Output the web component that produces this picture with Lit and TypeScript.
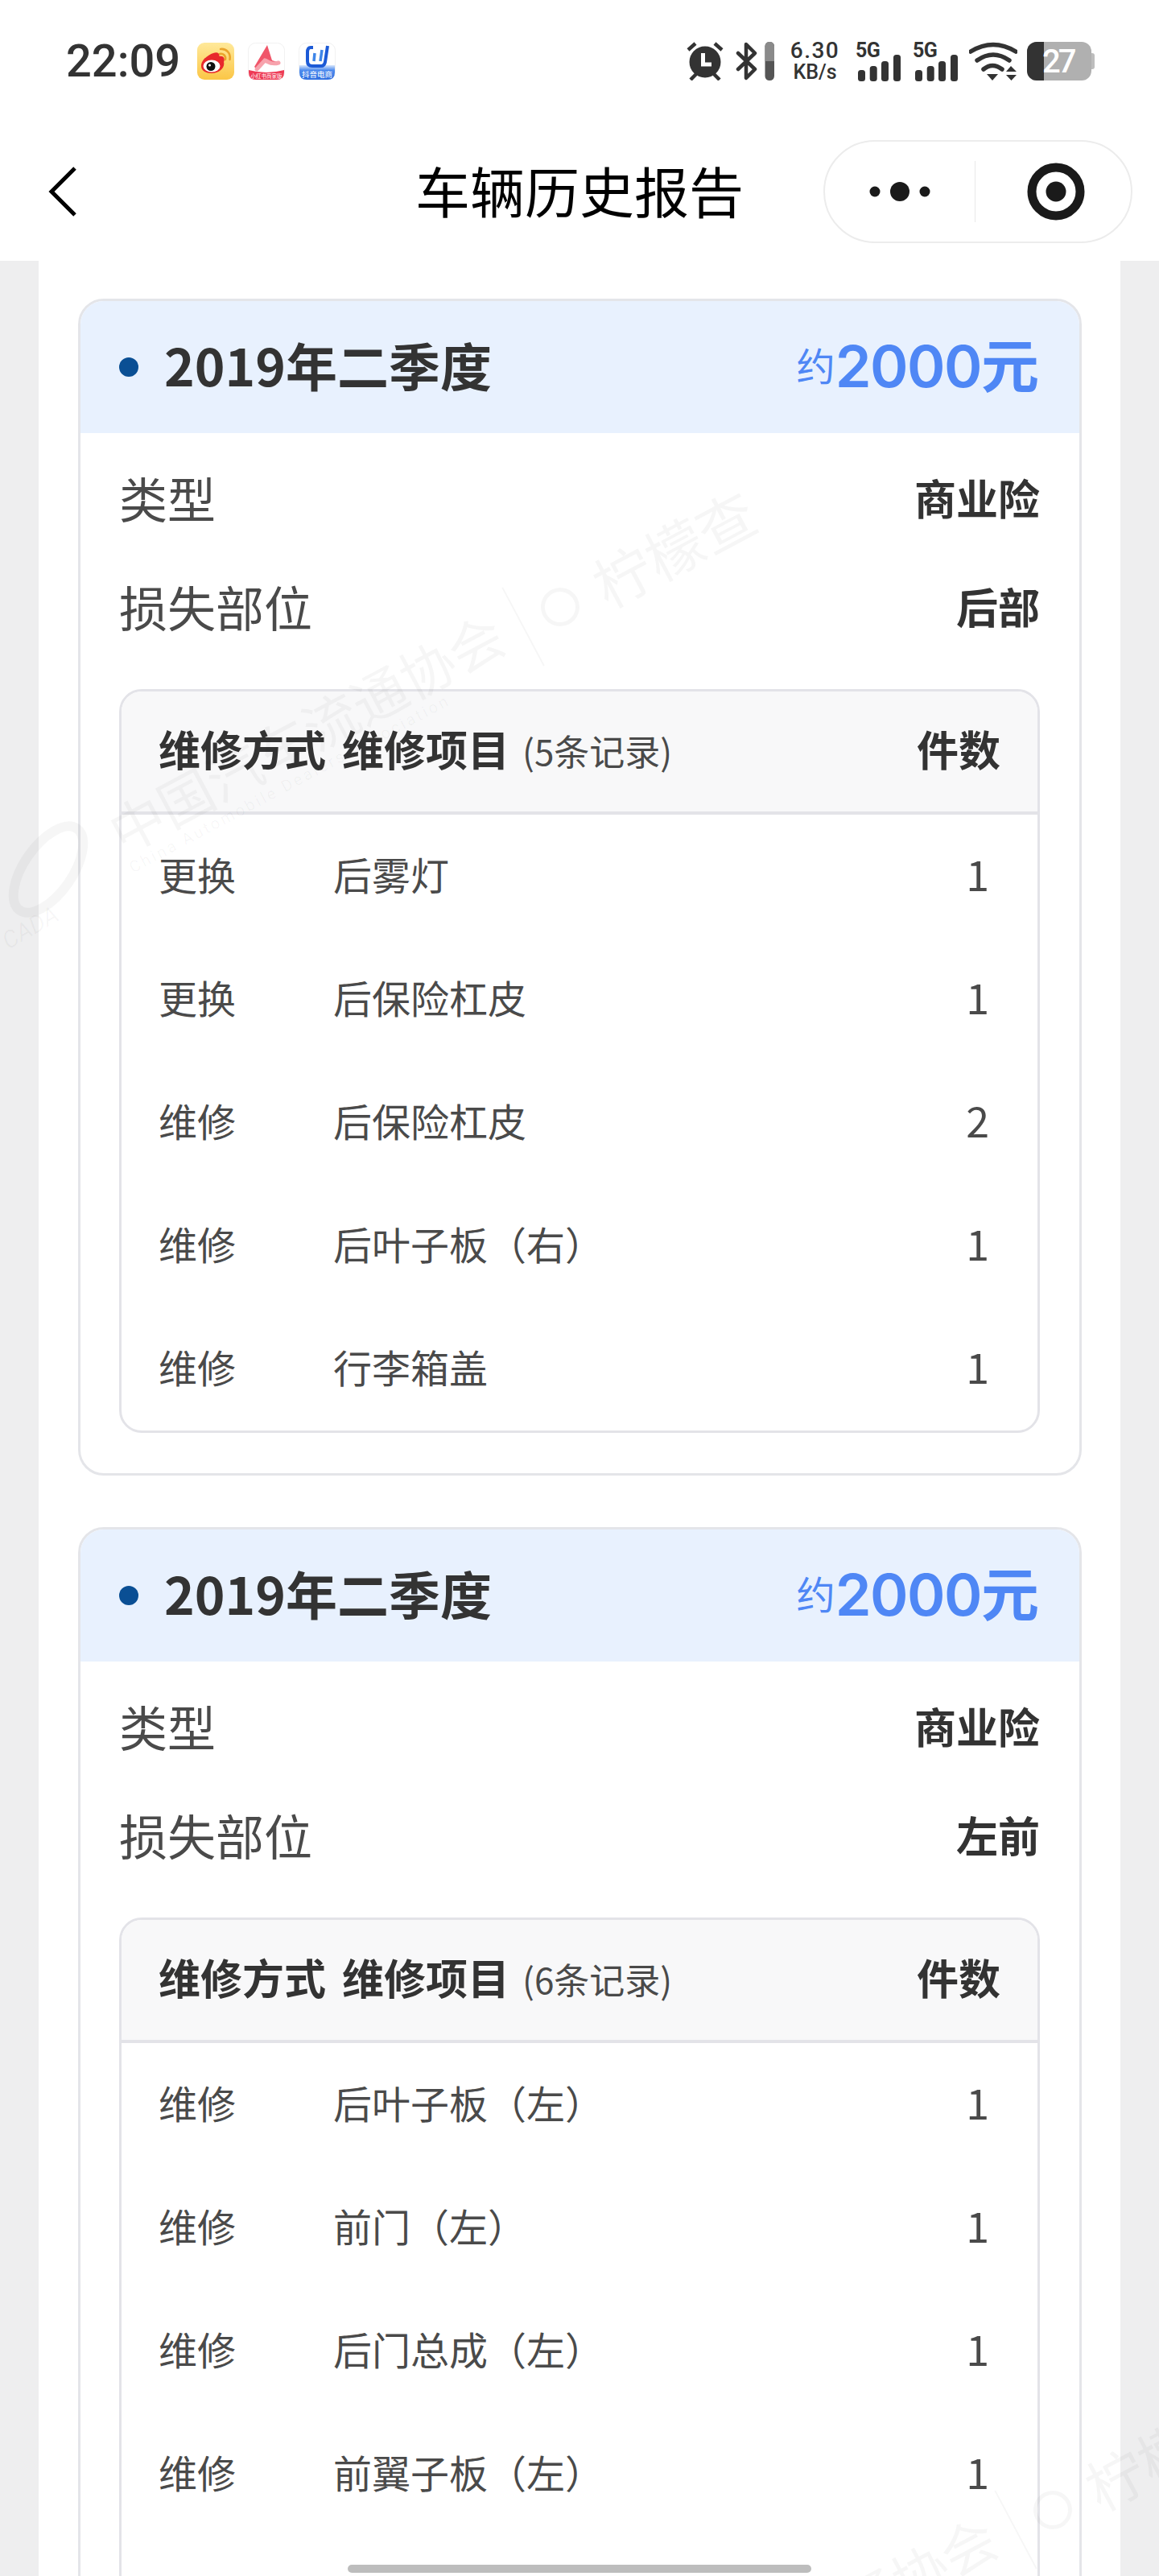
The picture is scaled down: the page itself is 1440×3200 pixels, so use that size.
import { LitElement, html, css, svg } from "lit";
import { customElement } from "lit/decorators.js";

interface Row { way: string; item: string; n: string }
interface Claim { quarter: string; type: string; part: string; records: string; rows: Row[] }

const claims: Claim[] = [
  {
    quarter: "2019年二季度", type: "商业险", part: "后部", records: "(5条记录)",
    rows: [
      { way: "更换", item: "后雾灯", n: "1" },
      { way: "更换", item: "后保险杠皮", n: "1" },
      { way: "维修", item: "后保险杠皮", n: "2" },
      { way: "维修", item: "后叶子板（右）", n: "1" },
      { way: "维修", item: "行李箱盖", n: "1" },
    ],
  },
  {
    quarter: "2019年二季度", type: "商业险", part: "左前", records: "(6条记录)",
    rows: [
      { way: "维修", item: "后叶子板（左）", n: "1" },
      { way: "维修", item: "前门（左）", n: "1" },
      { way: "维修", item: "后门总成（左）", n: "1" },
      { way: "维修", item: "前翼子板（左）", n: "1" },
      { way: "", item: "", n: "" },
      { way: "", item: "", n: "" },
    ],
  },
];

const signal = svg`
  <text x="-3" y="3" font-family="Roboto" font-weight="700" font-size="25" letter-spacing="-0.5" fill="#333">5G</text>
  <rect x="0" y="19" width="9" height="14" rx="3.5" fill="#333"/>
  <rect x="14.7" y="14" width="9" height="19" rx="3.5" fill="#333"/>
  <rect x="29" y="8" width="9" height="25" rx="3.5" fill="#333"/>
  <rect x="44" y="0" width="9" height="33" rx="3.5" fill="#333"/>`;

@customElement("app-root")
export class AppRoot extends LitElement {
  static styles = css`
    :host {
      display: block;
      position: relative;
      width: 1440px;
      height: 3200px;
      overflow: hidden;
      background: #fff;
      font-family: "Noto Sans CJK SC", "Noto Sans", sans-serif;
      color: #333;
    }
    svg { display: block; flex: none; }

    .status { height: 152px; display: flex; align-items: center; justify-content: space-between; padding: 0 80px 0 82px; }
    .status-left, .status-right { display: flex; align-items: center; }
    .time { font-family: Roboto, sans-serif; font-weight: 500; font-size: 56px; line-height: 60px; color: #333; width: 141px; margin-right: 22px; white-space: nowrap; }
    .apps { display: flex; gap: 17px; }
    .speed { width: 61px; margin: 0 20px; display: flex; flex-direction: column; align-items: center; font-family: Roboto, sans-serif; font-weight: 500; color: #333; white-space: nowrap; }
    .speed b { font-weight: 500; font-size: 28px; line-height: 27px; letter-spacing: 1.5px; }
    .speed span { font-size: 25px; line-height: 27px; }
    .gap14 { margin-left: 14px; }
    .gap15 { margin-left: 15px; }
    .gap12 { margin-left: 12px; }

    .nav { height: 172px; display: grid; grid-template-columns: 1fr auto 1fr; align-items: center; }
    .back { padding-left: 60px; }
    .title { font-size: 68px; line-height: 90px; padding-bottom: 4px; color: #000; white-space: nowrap; }
    .capsule-wrap { display: flex; justify-content: flex-end; padding-right: 33px; }
    .capsule { width: 384px; height: 128px; box-sizing: border-box; border: 2px solid #ececec; border-radius: 64px; display: flex; align-items: center; }
    .half { flex: 1; display: flex; justify-content: center; }
    .half.second { padding-left: 8px; }
    .divider { width: 1px; height: 76px; background: #e8e8e8; }

    .page { background: #eeeeef; padding: 0 48px; }
    .sheet { background: #fff; padding: 47px 48px 0 49px; display: flex; flex-direction: column; gap: 64px; }

    .card { border: 3px solid #e4e5e9; border-radius: 32px; overflow: hidden; }
    .card-head { height: 164px; background: #e8f1fe; display: flex; align-items: center; padding: 0 50px 0 48px; }
    .dot { width: 24px; height: 24px; border-radius: 50%; background: #0a4f94; margin-right: 32px; }
    .quarter { flex: 1; font-size: 64px; font-weight: 700; line-height: 80px; padding-bottom: 8px; color: #333; white-space: nowrap; }
    .price { display: flex; align-items: center; padding-bottom: 8px; color: #4f87f5; white-space: nowrap; }
    .about { font-size: 48px; line-height: 80px; }
    .amount { font-size: 72px; font-weight: 700; line-height: 80px; }
    .amount i { font-family: Inter, sans-serif; font-style: normal; font-weight: 600; font-size: 72px; letter-spacing: -1.5px; }

    .card-body { padding: 16px 49px 50px 48px; }
    .fact { height: 135px; box-sizing: border-box; padding-bottom: 8px; display: flex; align-items: center; justify-content: space-between; }
    .fact-label { font-size: 60px; line-height: 80px; color: #4a4a4a; }
    .fact-value { font-size: 52px; font-weight: 700; line-height: 80px; color: #333; }

    .table { margin-top: 32px; border: 3px solid #e3e3e8; border-radius: 28px; overflow: hidden; }
    .table-head { height: 141px; padding: 0 46px 8px; background: #f8f8f9; border-bottom: 4px solid #e3e3e8; display: flex; align-items: center; }
    .th { font-size: 52px; font-weight: 700; line-height: 70px; color: #333; white-space: nowrap; }
    .th.way { margin-right: 20px; }
    .records { flex: 1; font-size: 44px; line-height: 70px; color: #4a4a4a; margin-left: 16px; padding-top: 4px; white-space: nowrap; }
    .row { height: 153px; box-sizing: border-box; padding: 0 60px 8px 46px; display: flex; align-items: center; font-size: 48px; line-height: 70px; color: #4a4a4a; }
    .way-cell { width: 217px; }
    .item-cell { flex: 1; }
    .n-cell { font-size: 52px; }

    .mark { position: absolute; display: flex; align-items: center; gap: 27px; transform-origin: 0 50%; transform: rotate(-28deg); color: rgba(0, 0, 0, 0.035); white-space: nowrap; pointer-events: none; }
    .mark.one { left: 145px; top: 992px; }
    .mark.two { left: 757px; top: 3356px; }
    .mark-cn { display: flex; flex-direction: column; }
    .mark-cn b { font-weight: 400; font-size: 68px; line-height: 72px; }
    .mark-cn span { font-family: Roboto, sans-serif; font-size: 20px; line-height: 24px; letter-spacing: 3px; }
    .mark-bar { width: 2px; height: 110px; background: rgba(0, 0, 0, 0.035); }
    .mark-lemon { font-size: 72px; line-height: 72px; }
    .mark-ring { width: 48px; height: 48px; border: 5px solid rgba(0, 0, 0, 0.035); border-radius: 50%; box-sizing: border-box; }
    .mark-logo { position: absolute; left: 0; top: 1010px; pointer-events: none; }

    .home { position: absolute; left: 432px; top: 3186px; width: 576px; height: 10px; border-radius: 5px; background: #bdbdbd; }
  `;

  private apps() {
    return html`<div class="apps">
      <svg width="46" height="46" viewBox="0 0 46 46">
        <defs><linearGradient id="wb" x1="0" y1="0" x2="0" y2="1"><stop offset="0" stop-color="#ffe99a"/><stop offset="1" stop-color="#fbc646"/></linearGradient></defs>
        <rect width="46" height="46" rx="9" fill="url(#wb)"/>
        <path d="M5 29C5 21 14 15 20 13C24 11.500 28 12 27.500 17C33 16 35 20 33 24C35 31 27 38 18 38C11 38 5 35 5 29Z" fill="#e8292c"/>
        <ellipse cx="18" cy="29" rx="10.500" ry="7.500" fill="#fff"/>
        <circle cx="17" cy="29.500" r="5.500" fill="#111"/>
        <circle cx="15.500" cy="28" r="1.500" fill="#fff"/>
        <path d="M28 14C32 13 36 16 35 21M29 8C36 7 42 13 40.500 21" fill="none" stroke="#eaa42c" stroke-width="2.500" stroke-linecap="round"/>
      </svg>
      <svg width="46" height="46" viewBox="0 0 46 46">
        <rect x="0.500" y="0.500" width="45" height="45" rx="9" fill="#fff" stroke="#f1f1f1"/>
        <path d="M24 3L30 22L40 25L32 27C26 27 24 23 21 22L11 33L8 30Z" fill="#f0566a"/>
        <path d="M11 33L21 22C25 23 28 28 38 25" fill="none" stroke="#f7a3ad" stroke-width="5" stroke-linecap="round"/>
        <path d="M1 34Q23 40 45 34V37Q45 46 36 46H10Q1 46 1 37Z" fill="#ee3b55"/>
        <text x="23" y="44" text-anchor="middle" font-size="6.500" fill="#fff" font-family="Noto Sans CJK SC">小红书商家版</text>
      </svg>
      <svg width="46" height="46" viewBox="0 0 46 46">
        <defs><linearGradient id="dy" x1="0" y1="0" x2="0" y2="1"><stop offset="0" stop-color="#d8e6fb"/><stop offset="0.35" stop-color="#4f8cee"/><stop offset="1" stop-color="#2f6fe0"/></linearGradient></defs>
        <rect x="0.500" y="0.500" width="45" height="45" rx="9" fill="#fff" stroke="#f1f1f1"/>
        <path d="M1 28H45V37Q45 46 36 46H10Q1 46 1 37Z" fill="url(#dy)"/>
        <path d="M18 6H15Q11 6 11 12V23Q11 29 17 29H28Q32 29 33 24L36 4" fill="none" stroke="#1c5ad6" stroke-width="4"/>
        <path d="M19 23L20 13M27 23L29 9" fill="none" stroke="#3f86e8" stroke-width="3.500"/>
        <text x="23" y="43" text-anchor="middle" font-size="9.500" fill="#fff" font-family="Noto Sans CJK SC">抖音电商</text>
      </svg>
    </div>`;
  }

  private statusRight() {
    return html`<div class="status-right">
      <svg width="48" height="48" viewBox="0 0 48 48">
        <circle cx="24" cy="25" r="19.500" fill="#333"/>
        <path d="M21.500 14V28H32" fill="none" stroke="#fff" stroke-width="5"/>
        <path d="M3 10L12 2M45 10L36 2M6 47L13 40M42 47L35 40" stroke="#333" stroke-width="4.500" fill="none"/>
      </svg>
      <svg class="gap14" width="48" height="48" viewBox="0 0 48 48">
        <path d="M3 14L24 34L13 45V3L24 14L3 34" fill="none" stroke="#333" stroke-width="4.500" stroke-linejoin="round" stroke-linecap="round"/>
        <rect x="36.500" y="0" width="11.500" height="48" rx="5.500" fill="#555"/>
        <path d="M36.500 24V5.500A5.500 5.500 0 0 1 48 5.500V24Z" fill="#8a8a8a"/>
      </svg>
      <div class="speed"><b>6.30</b><span>KB/s</span></div>
      <svg width="56" height="50" viewBox="-3 -17 56 50" style="overflow:visible">${signal}</svg>
      <svg class="gap15" width="56" height="50" viewBox="-3 -17 56 50" style="overflow:visible">${signal}</svg>
      <svg class="gap14" width="60" height="50" viewBox="0 0 60 50">
        <path d="M2 13Q30 -4 58 13M10 24Q30 10 50 24M18 35Q29 26 41 35" fill="none" stroke="#333" stroke-width="5.500" stroke-linecap="round"/>
        <path d="M22 41H36L29 49Z M52 31L46 38H59Z M46 42H59L52.500 49Z" fill="#333"/>
      </svg>
      <svg class="gap12" width="84" height="48" viewBox="0 0 84 48">
        <rect x="0" y="0" width="80" height="48" rx="12" fill="#b0b0b0"/>
        <path d="M12 0H21V48H12A12 12 0 0 1 0 36V12A12 12 0 0 1 12 0Z" fill="#333"/>
        <path d="M80 14H81A3 3 0 0 1 84 17V31A3 3 0 0 1 81 34H80Z" fill="#bdbdbd"/>
        <text x="19" y="38" font-family="Roboto" font-weight="500" font-size="40" letter-spacing="-3" fill="#fff">27</text>
      </svg>
    </div>`;
  }

  private nav() {
    return html`<div class="nav">
      <div class="back">
        <svg width="36" height="64" viewBox="0 0 36 64">
          <path d="M33 3L4 32L33 61" fill="none" stroke="#000" stroke-width="5"/>
        </svg>
      </div>
      <div class="title">车辆历史报告</div>
      <div class="capsule-wrap">
        <div class="capsule">
          <div class="half">
            <svg width="76" height="26" viewBox="0 0 76 26">
              <circle cx="7" cy="13" r="6.500" fill="#1a1a1a"/>
              <circle cx="38" cy="13" r="12" fill="#1a1a1a"/>
              <circle cx="69" cy="13" r="6.500" fill="#1a1a1a"/>
            </svg>
          </div>
          <div class="divider"></div>
          <div class="half second">
            <svg width="72" height="72" viewBox="0 0 72 72">
              <circle cx="36" cy="36" r="30" fill="none" stroke="#1a1a1a" stroke-width="11"/>
              <circle cx="36" cy="36" r="12.500" fill="#1a1a1a"/>
            </svg>
          </div>
        </div>
      </div>
    </div>`;
  }

  private card(c: Claim) {
    return html`<section class="card">
      <header class="card-head">
        <span class="dot"></span>
        <span class="quarter">${c.quarter}</span>
        <span class="price"><span class="about">约</span><span class="amount"><i>2000</i>元</span></span>
      </header>
      <div class="card-body">
        <div class="fact"><span class="fact-label">类型</span><span class="fact-value">${c.type}</span></div>
        <div class="fact"><span class="fact-label">损失部位</span><span class="fact-value">${c.part}</span></div>
        <div class="table">
          <div class="table-head">
            <span class="th way">维修方式</span>
            <span class="th">维修项目</span>
            <span class="records">${c.records}</span>
            <span class="th">件数</span>
          </div>
          ${c.rows.map((r) => html`<div class="row">
            <span class="way-cell">${r.way}</span>
            <span class="item-cell">${r.item}</span>
            <span class="n-cell">${r.n}</span>
          </div>`)}
        </div>
      </div>
    </section>`;
  }

  private mark(cls: string) {
    return html`<div class="mark ${cls}">
      <div class="mark-cn"><b>中国汽车流通协会</b><span>China Automobile Dealers Association</span></div>
      <div class="mark-bar"></div>
      <div class="mark-ring"></div>
      <div class="mark-lemon">柠檬查</div>
    </div>`;
  }

  render() {
    return html`
      <div class="status">
        <div class="status-left"><span class="time">22:09</span>${this.apps()}</div>
        ${this.statusRight()}
      </div>
      ${this.nav()}
      <main class="page"><div class="sheet">${claims.map((c) => this.card(c))}</div></main>
      ${this.mark("one")}
      ${this.mark("two")}
      <svg class="mark-logo" width="140" height="190" viewBox="0 0 140 190">
        <ellipse cx="60" cy="70" rx="30" ry="62" transform="rotate(35 60 70)" fill="none" stroke="rgba(0,0,0,0.035)" stroke-width="12"/>
        <text x="10" y="170" transform="rotate(-30 10 170)" font-family="Roboto" font-style="italic" font-size="30" fill="rgba(0,0,0,0.035)">CADA</text>
      </svg>
      <div class="home"></div>
    `;
  }
}
